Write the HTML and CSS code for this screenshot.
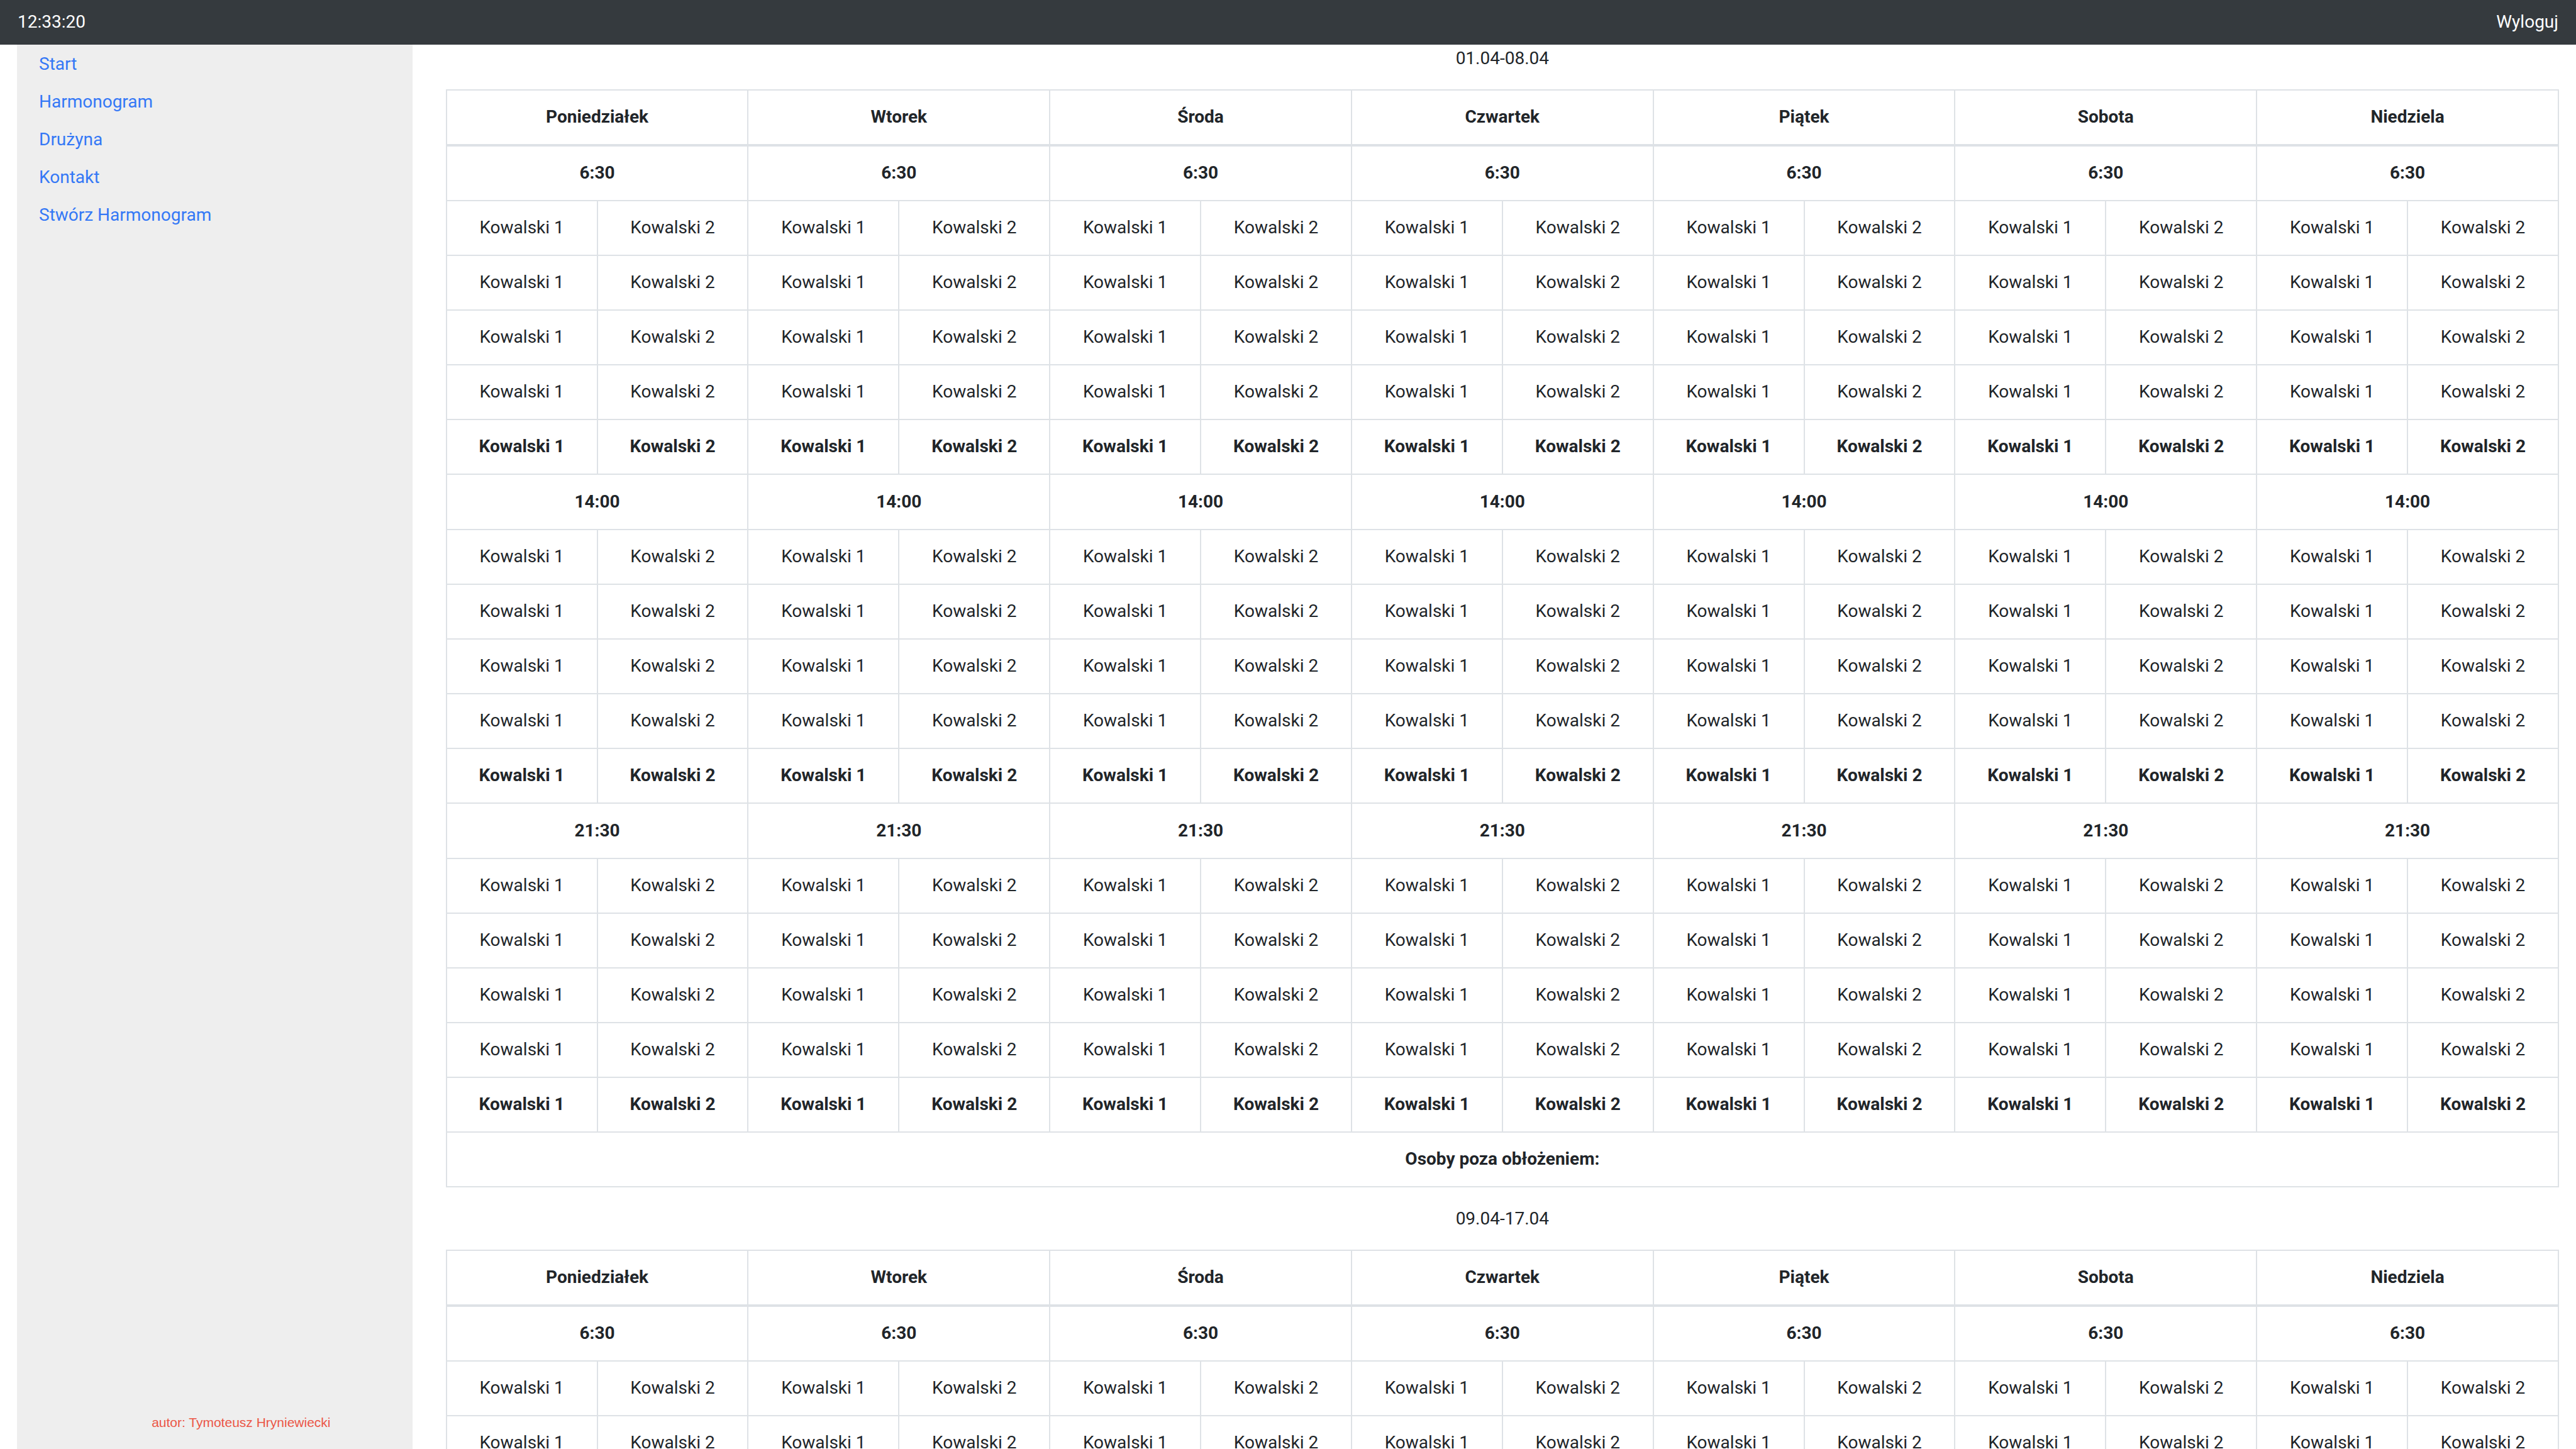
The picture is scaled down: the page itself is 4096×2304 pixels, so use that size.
FILE: index.html
```html
<!DOCTYPE html>
<html lang="pl">
<head>
  <meta charset="utf-8">
  <meta name="viewport" content="width=device-width, initial-scale=1">
  <title>Harmonogram</title>
  <link rel="stylesheet" href="styles.css">
</head>
<body>
  <header class="topbar">
    <time class="clock">12:33:20</time>
    <a class="logout" href="#wyloguj">Wyloguj</a>
  </header>
  <div class="layout">
    <aside class="sidebar">
      <nav>
        <ul class="menu">
          <li><a href="#start">Start</a></li>
          <li><a href="#harmonogram">Harmonogram</a></li>
          <li><a href="#druzyna">Drużyna</a></li>
          <li><a href="#kontakt">Kontakt</a></li>
          <li><a href="#stworz">Stwórz Harmonogram</a></li>
        </ul>
      </nav>
      <p class="author">autor: Tymoteusz Hryniewiecki</p>
    </aside>
    <main class="content" id="weeks"></main>
  </div>
  <script src="schedule.js"></script>
</body>
</html>
```
FILE: styles.css
```css
* {
  box-sizing: border-box;
}

body {
  margin: 0;
  height: 100vh;
  display: flex;
  flex-direction: column;
  overflow: hidden;
  background: #fff;
  color: #212529;
  font-family: Roboto, "Noto Sans", sans-serif;
  font-size: 28px;
  line-height: 43px;
}

a {
  color: #3478f6;
  text-decoration: none;
}

.topbar {
  display: flex;
  justify-content: space-between;
  padding: 13px 28px 15px;
  background: #353a3e;
  color: #fff;
}

.logout {
  color: #fff;
}

.layout {
  flex: 1;
  min-height: 0;
  display: grid;
  grid-template-columns: minmax(0, 1fr) minmax(0, 5fr);
}

.sidebar {
  display: flex;
  flex-direction: column;
  justify-content: space-between;
  margin: 0 27px;
  padding: 9px 35px 21px;
  background: #eee;
}

.menu {
  display: flex;
  flex-direction: column;
  gap: 17px;
  margin: 0;
  padding: 0;
  list-style: none;
}

.author {
  margin: 0;
  padding-left: 84px;
  text-align: center;
  color: #eb5545;
  font-family: "Liberation Sans", Arial, sans-serif;
  font-size: 21px;
}

.content {
  padding: 0 27px 0 26px;
  overflow-y: auto;
  scrollbar-width: none;
}

.dates {
  margin: 0 0 28px;
  text-align: center;
}

.week {
  width: 100%;
  margin-bottom: 28px;
  border-collapse: collapse;
  table-layout: fixed;
  text-align: center;
}

.week th,
.week td {
  padding: 20px 21px 22px;
  border: 2px solid #dee2e6;
}

.week th,
.week .leader td {
  font-weight: 700;
}

.week thead th {
  border-bottom-width: 4px;
}

.week tbody + tbody .shift th {
  padding-top: 21px;
}
```
FILE: schedule.js
```js
const days = ["Poniedziałek", "Wtorek", "Środa", "Czwartek", "Piątek", "Sobota", "Niedziela"];
const shifts = ["6:30", "14:00", "21:30"];
const weeks = ["01.04-08.04", "09.04-17.04"];
const crewRows = 4;

const pair = "<td>Kowalski 1</td><td>Kowalski 2</td>";

function shiftBody(hour) {
  const head = days.map(() => `<th colspan="2">${hour}</th>`).join("");
  const crew = `<tr>${pair.repeat(days.length)}</tr>`.repeat(crewRows);
  const leader = `<tr class="leader">${pair.repeat(days.length)}</tr>`;
  return `<tbody><tr class="shift">${head}</tr>${crew}${leader}</tbody>`;
}

function weekTable(dates) {
  const head = days.map((day) => `<th colspan="2" scope="colgroup">${day}</th>`).join("");
  return `<p class="dates">${dates}</p>
    <table class="week">
      <thead><tr>${head}</tr></thead>
      ${shifts.map(shiftBody).join("")}
      <tfoot><tr><th colspan="14">Osoby poza obłożeniem:</th></tr></tfoot>
    </table>`;
}

document.getElementById("weeks").innerHTML = weeks.map(weekTable).join("");
```
